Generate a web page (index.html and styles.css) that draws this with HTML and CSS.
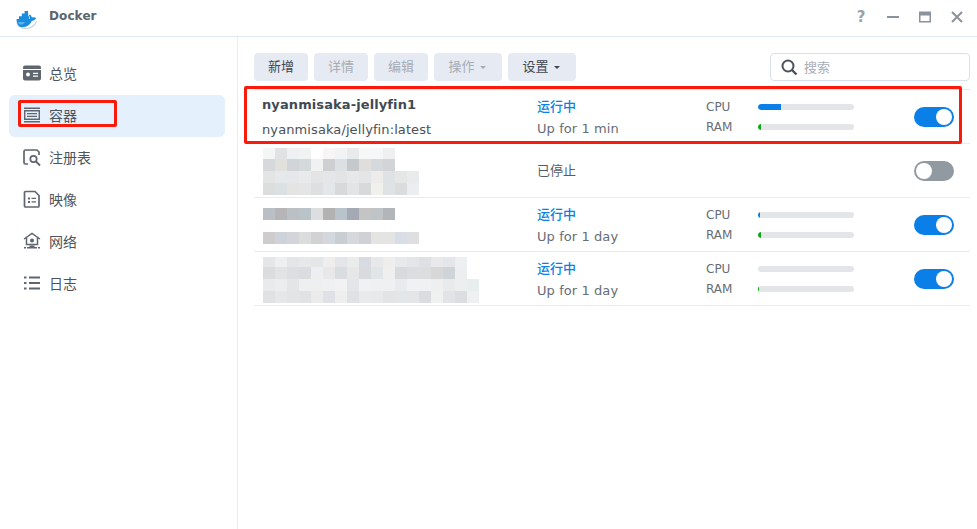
FILE: index.html
```html
<!DOCTYPE html>
<html lang="zh">
<head>
<meta charset="utf-8">
<title>Docker</title>
<link rel="stylesheet" href="styles.css">
</head>
<body>
<div class="window">
  <header class="titlebar">
    <svg class="logo" width="24" height="20" viewBox="0 0 24 20">
      <path fill="#c9d1d8" d="M1 12c1 5 6 7.500 11 7 5-.5 8.500-3.500 10.500-8l-1.500.5c-2 4-6 6.500-10.500 6.500-4 0-7.500-2-9.500-6z"/>
      <path fill="#1a8cdf" d="M1.500 9h13.200c.1-1.300-.1-2.600-.9-3.700l1.200-.9c1.100.9 1.700 2 1.900 3.200 1.400-.5 2.900-.4 4.300.4-.9 1.900-2.500 2.800-4.400 2.800-1.400 3.900-5.300 6.400-9.300 6.400-4 0-6-3.100-6-8.200z"/>
      <path fill="#1a8cdf" d="M4 6.200h10V9H4zM6.800 3.600h6.400v3H6.800zM9.600 1h3.400v3H9.600z"/>
      <path fill="#5cb4ee" d="M3 12h7c-.8 1.600-2.500 2.600-4.500 2.600-1.200 0-2-.9-2.500-2.600z"/>
    </svg>
    <span class="app-name">Docker</span>
    <div class="win-controls">
      <span class="help">?</span>
      <svg width="14" height="14" viewBox="0 0 14 14"><path fill="#8b929b" d="M1 6h12v2H1z"/></svg>
      <svg width="14" height="14" viewBox="0 0 14 14"><path fill="#8b929b" fill-rule="evenodd" d="M1 1.500h12v11H1zM2.500 5.500v5.500h9V5.500z"/></svg>
      <svg width="14" height="14" viewBox="0 0 14 14"><path stroke="#8b929b" stroke-width="2" d="M2 2l10 10M12 2L2 12"/></svg>
    </div>
  </header>
  <div class="main">
    <nav class="sidebar">
      <a class="nav-item">
        <svg class="nav-icon" viewBox="0 0 20 20"><rect x="1" y="2.500" width="18" height="15" rx="2" fill="#5f6670"/><path fill="#fff" d="M1 6h18v1H1z"/><circle cx="6" cy="11.500" r="2" fill="#fff"/><path fill="#fff" d="M11 9.800h5v1.200h-5zM11 12.500h5v1.200h-5z"/></svg>
        <span>总览</span>
      </a>
      <a class="nav-item active">
        <svg class="nav-icon" viewBox="0 0 20 20"><path fill="#5f6670" d="M2 2.500h16v1.600H2zM2 15.900h16v1.600H2z"/><path fill="none" stroke="#5f6670" stroke-width="1.400" d="M2.700 5.700h14.600v8.600H2.700z"/><path fill="#5f6670" d="M5 8h10v1.200H5zM5 10.800h10V12H5z"/></svg>
        <span>容器</span>
      </a>
      <a class="nav-item">
        <svg class="nav-icon" viewBox="0 0 20 20"><path fill="none" stroke="#5f6670" stroke-width="1.700" d="M6 17H3.500a1.500 1.500 0 0 1-1.500-1.500v-11A1.500 1.500 0 0 1 3.500 3H15l2 2v3"/><circle cx="11.500" cy="12" r="3.200" fill="none" stroke="#5f6670" stroke-width="1.700"/><path stroke="#5f6670" stroke-width="1.800" d="M14 14.500l4 4"/></svg>
        <span>注册表</span>
      </a>
      <a class="nav-item">
        <svg class="nav-icon" viewBox="0 0 20 20"><path fill="none" stroke="#5f6670" stroke-width="1.700" d="M3.500 2.500H13l4 4v10.500a1 1 0 0 1-1 1H3.500a1 1 0 0 1-1-1V3.500a1 1 0 0 1 1-1z"/><path fill="#5f6670" d="M6 8.500h2v2H6zM9.500 8.800H14V10H9.500zM6 12h2v2H6zM9.500 12.300H14v1.200H9.500z"/></svg>
        <span>映像</span>
      </a>
      <a class="nav-item">
        <svg class="nav-icon" viewBox="0 0 20 20"><path fill="none" stroke="#5f6670" stroke-width="1.500" d="M2 8l8-5.500L18 8M4.500 7v6.500h11V7"/><circle cx="10" cy="9.500" r="2" fill="#5f6670"/><path fill="#5f6670" d="M7.500 14.500h5V16h2.500v1.500H5V16h2.500zM2 16h2v1.500H2zM16 16h2v1.500h-2z"/></svg>
        <span>网络</span>
      </a>
      <a class="nav-item">
        <svg class="nav-icon" viewBox="0 0 20 20"><path fill="#5f6670" d="M2 3.500h2.500v2H2zM7 3.500h11v2H7zM2 9h2.500v2H2zM7 9h11v2H7zM2 14.500h2.500v2H2zM7 14.500h11v2H7z"/></svg>
        <span>日志</span>
      </a>
    </nav>
    <section class="content">
      <div class="toolbar">
        <button class="btn">新增</button>
        <button class="btn disabled">详情</button>
        <button class="btn disabled">编辑</button>
        <button class="btn disabled wide">操作<i class="caret"></i></button>
        <button class="btn wide">设置<i class="caret"></i></button>
        <div class="search">
          <svg width="18" height="18" viewBox="0 0 18 18"><circle cx="8" cy="8" r="5.500" fill="none" stroke="#4c535c" stroke-width="2"/><path stroke="#4c535c" stroke-width="2.400" d="M12 12l4.500 4.500"/></svg>
          <span>搜索</span>
        </div>
      </div>
      <div class="list">
        <div class="row first">
          <div class="names">
            <div class="name">nyanmisaka-jellyfin1</div>
            <div class="image">nyanmisaka/jellyfin:latest</div>
          </div>
          <div class="status">
            <div class="state run">运行中</div>
            <div class="uptime">Up for 1 min</div>
          </div>
          <div class="usage">
            <div class="meter"><span>CPU</span><div class="bar"><div class="fill blue" style="width:24%"></div></div></div>
            <div class="meter"><span>RAM</span><div class="bar"><div class="fill green" style="width:3%"></div></div></div>
          </div>
          <div class="toggle on"><i></i></div>
        </div>
        <div class="row">
          <div class="names">
            <svg class="mosaic" width="156" height="47" viewBox="0 0 156 47">
              <g>
                <rect x="0" y="0" width="12" height="11" fill="#f4f5f5"/><rect x="12" y="0" width="12" height="11" fill="#e0e2e4"/><rect x="24" y="0" width="12" height="11" fill="#eff0f1"/><rect x="36" y="0" width="12" height="11" fill="#f1f2f2"/><rect x="60" y="0" width="12" height="11" fill="#f7f6f5"/><rect x="72" y="0" width="12" height="11" fill="#f2f3f4"/><rect x="84" y="0" width="12" height="11" fill="#e9eaec"/><rect x="96" y="0" width="12" height="11" fill="#f6f7f7"/><rect x="108" y="0" width="12" height="11" fill="#f6f7f8"/><rect x="120" y="0" width="12" height="11" fill="#eeeff0"/>
                <rect x="0" y="11" width="12" height="12" fill="#d6d9db"/><rect x="12" y="11" width="12" height="12" fill="#e2e0dd"/><rect x="24" y="11" width="12" height="12" fill="#d1d5d9"/><rect x="36" y="11" width="12" height="12" fill="#d4d9dc"/><rect x="48" y="11" width="12" height="12" fill="#f0f2f1"/><rect x="60" y="11" width="12" height="12" fill="#cdcfd0"/><rect x="72" y="11" width="12" height="12" fill="#dce0e2"/><rect x="84" y="11" width="12" height="12" fill="#c5c9cb"/><rect x="96" y="11" width="12" height="12" fill="#dfdedc"/><rect x="108" y="11" width="12" height="12" fill="#d5d9dc"/><rect x="120" y="11" width="12" height="12" fill="#d2d5d7"/>
                <rect x="0" y="23" width="12" height="12" fill="#e3e4e4"/><rect x="12" y="23" width="12" height="12" fill="#e6e9eb"/><rect x="24" y="23" width="12" height="12" fill="#e5e7ea"/><rect x="36" y="23" width="12" height="12" fill="#e9eaea"/><rect x="48" y="23" width="12" height="12" fill="#e4e4e5"/><rect x="60" y="23" width="12" height="12" fill="#e4e6e8"/><rect x="72" y="23" width="12" height="12" fill="#e3e4e6"/><rect x="84" y="23" width="12" height="12" fill="#e7e8ea"/><rect x="96" y="23" width="12" height="12" fill="#e3e5e7"/><rect x="108" y="23" width="12" height="12" fill="#edecea"/><rect x="120" y="23" width="12" height="12" fill="#dfe2e4"/><rect x="132" y="23" width="12" height="12" fill="#e5e6e6"/><rect x="144" y="23" width="12" height="12" fill="#e8eaec"/>
                <rect x="0" y="35" width="12" height="12" fill="#dcdddd"/><rect x="12" y="35" width="12" height="12" fill="#dbe0e3"/><rect x="24" y="35" width="12" height="12" fill="#e4e4e3"/><rect x="36" y="35" width="12" height="12" fill="#e4e5e5"/><rect x="48" y="35" width="12" height="12" fill="#dedfe1"/><rect x="60" y="35" width="12" height="12" fill="#e3e7ea"/><rect x="72" y="35" width="12" height="12" fill="#d8d9db"/><rect x="84" y="35" width="12" height="12" fill="#e3e4e6"/><rect x="96" y="35" width="12" height="12" fill="#d8d9da"/><rect x="108" y="35" width="12" height="12" fill="#f0f0ed"/><rect x="120" y="35" width="12" height="12" fill="#dfe3e5"/><rect x="132" y="35" width="12" height="12" fill="#dbdcdd"/><rect x="144" y="35" width="12" height="12" fill="#ebeef0"/>
              </g>
            </svg>
          </div>
          <div class="status">
            <div class="state stopped">已停止</div>
          </div>
          <div class="usage"></div>
          <div class="toggle off"><i></i></div>
        </div>
        <div class="row">
          <div class="names">
            <svg class="mosaic" width="156" height="36" viewBox="0 0 156 36">
              <rect x="0" y="0" width="12" height="12" fill="#b9bfc4"/><rect x="12" y="0" width="12" height="12" fill="#b5b5b7"/><rect x="24" y="0" width="12" height="12" fill="#bac0c4"/><rect x="36" y="0" width="12" height="12" fill="#b9c3c8"/><rect x="48" y="0" width="12" height="12" fill="#dcdedf"/><rect x="60" y="0" width="12" height="12" fill="#b3b2b3"/><rect x="72" y="0" width="12" height="12" fill="#b9c3cc"/><rect x="84" y="0" width="12" height="12" fill="#a5a9b3"/><rect x="96" y="0" width="12" height="12" fill="#c4c4c4"/><rect x="108" y="0" width="12" height="12" fill="#bfc4c8"/><rect x="120" y="0" width="12" height="12" fill="#b2b6bb"/>
              <rect x="0" y="24" width="12" height="12" fill="#cfcdcc"/><rect x="12" y="24" width="12" height="12" fill="#cdd2db"/><rect x="24" y="24" width="12" height="12" fill="#d3d5da"/><rect x="36" y="24" width="12" height="12" fill="#d9dedc"/><rect x="48" y="24" width="12" height="12" fill="#d2d2d4"/><rect x="60" y="24" width="12" height="12" fill="#d2d8de"/><rect x="72" y="24" width="12" height="12" fill="#c9ced3"/><rect x="84" y="24" width="12" height="12" fill="#d7d8db"/><rect x="96" y="24" width="12" height="12" fill="#cfd1d6"/><rect x="108" y="24" width="12" height="12" fill="#e4e4e2"/><rect x="120" y="24" width="12" height="12" fill="#e4e4e4"/><rect x="132" y="24" width="12" height="12" fill="#d9dde6"/><rect x="144" y="24" width="12" height="12" fill="#dfdfe1"/>
            </svg>
          </div>
          <div class="status">
            <div class="state run">运行中</div>
            <div class="uptime">Up for 1 day</div>
          </div>
          <div class="usage">
            <div class="meter"><span>CPU</span><div class="bar"><div class="fill blue" style="width:2%"></div></div></div>
            <div class="meter"><span>RAM</span><div class="bar"><div class="fill green" style="width:3%"></div></div></div>
          </div>
          <div class="toggle on"><i></i></div>
        </div>
        <div class="row">
          <div class="names">
            <svg class="mosaic" width="216" height="46" viewBox="0 0 216 46">
              <rect x="0" y="0" width="12" height="10" fill="#e5e6e8"/><rect x="12" y="0" width="12" height="10" fill="#eeeff0"/><rect x="24" y="0" width="12" height="10" fill="#e4e5e8"/><rect x="36" y="0" width="12" height="10" fill="#e7e8e9"/><rect x="48" y="0" width="12" height="10" fill="#e5e6e8"/><rect x="60" y="0" width="12" height="10" fill="#eeeeee"/><rect x="72" y="0" width="12" height="10" fill="#e4e5e8"/><rect x="84" y="0" width="12" height="10" fill="#eaebeb"/><rect x="96" y="0" width="12" height="10" fill="#d8dbe2"/><rect x="108" y="0" width="12" height="10" fill="#e6e8ea"/><rect x="120" y="0" width="12" height="10" fill="#eeeeee"/><rect x="132" y="0" width="12" height="10" fill="#e8e9ea"/><rect x="144" y="0" width="12" height="10" fill="#e4e5e8"/><rect x="156" y="0" width="12" height="10" fill="#dfe0e3"/><rect x="168" y="0" width="12" height="10" fill="#e9e9ec"/><rect x="180" y="0" width="12" height="10" fill="#e5e6ea"/><rect x="192" y="0" width="12" height="10" fill="#eeeff0"/>
              <rect x="0" y="10" width="12" height="12" fill="#dadcde"/><rect x="12" y="10" width="12" height="12" fill="#e2e3e5"/><rect x="24" y="10" width="12" height="12" fill="#dcdee2"/><rect x="36" y="10" width="12" height="12" fill="#dbdcdf"/><rect x="48" y="10" width="12" height="12" fill="#eceef0"/><rect x="60" y="10" width="12" height="12" fill="#e8e8e9"/><rect x="72" y="10" width="12" height="12" fill="#d9dde1"/><rect x="84" y="10" width="12" height="12" fill="#e6e7e6"/><rect x="96" y="10" width="12" height="12" fill="#d8dadd"/><rect x="108" y="10" width="12" height="12" fill="#e2e5e8"/><rect x="120" y="10" width="12" height="12" fill="#f0efee"/><rect x="132" y="10" width="12" height="12" fill="#d9dadc"/><rect x="144" y="10" width="12" height="12" fill="#dcdde0"/><rect x="156" y="10" width="12" height="12" fill="#dcddde"/><rect x="168" y="10" width="12" height="12" fill="#d7d7d8"/><rect x="180" y="10" width="12" height="12" fill="#cfd4d9"/><rect x="192" y="10" width="12" height="12" fill="#eceef0"/>
              <rect x="0" y="22" width="12" height="12" fill="#e9eaeb"/><rect x="12" y="22" width="12" height="12" fill="#ecedee"/><rect x="24" y="22" width="12" height="12" fill="#e3e5e7"/><rect x="36" y="22" width="12" height="12" fill="#eef0ef"/><rect x="48" y="22" width="12" height="12" fill="#eef0ef"/><rect x="60" y="22" width="12" height="12" fill="#eef0f1"/><rect x="72" y="22" width="12" height="12" fill="#f1f2f1"/><rect x="84" y="22" width="12" height="12" fill="#e3e5ea"/><rect x="96" y="22" width="12" height="12" fill="#f0f1f3"/><rect x="108" y="22" width="12" height="12" fill="#eff0f2"/><rect x="120" y="22" width="12" height="12" fill="#eff0f1"/><rect x="132" y="22" width="12" height="12" fill="#e8eaec"/><rect x="144" y="22" width="12" height="12" fill="#f0f1f2"/><rect x="156" y="22" width="12" height="12" fill="#f0f1f2"/><rect x="168" y="22" width="12" height="12" fill="#edeff0"/><rect x="180" y="22" width="12" height="12" fill="#e8eaec"/><rect x="192" y="22" width="12" height="12" fill="#edeeef"/><rect x="204" y="22" width="12" height="12" fill="#e8edee"/>
              <rect x="0" y="34" width="12" height="12" fill="#dfe1e3"/><rect x="12" y="34" width="12" height="12" fill="#e6e7e8"/><rect x="24" y="34" width="12" height="12" fill="#e2e4e6"/><rect x="36" y="34" width="12" height="12" fill="#e0e2e4"/><rect x="48" y="34" width="12" height="12" fill="#ebebeb"/><rect x="60" y="34" width="12" height="12" fill="#dfe1e6"/><rect x="72" y="34" width="12" height="12" fill="#edeeed"/><rect x="84" y="34" width="12" height="12" fill="#dfe1e4"/><rect x="96" y="34" width="12" height="12" fill="#e9eaec"/><rect x="108" y="34" width="12" height="12" fill="#e8e9e9"/><rect x="120" y="34" width="12" height="12" fill="#e2e4e6"/><rect x="132" y="34" width="12" height="12" fill="#e3e6e8"/><rect x="144" y="34" width="12" height="12" fill="#e3e5e7"/><rect x="156" y="34" width="12" height="12" fill="#d9dde0"/><rect x="168" y="34" width="12" height="12" fill="#eff0f0"/><rect x="180" y="34" width="12" height="12" fill="#e1e3e6"/><rect x="192" y="34" width="12" height="12" fill="#dbdde0"/><rect x="204" y="34" width="12" height="12" fill="#eef0f2"/>
            </svg>
          </div>
          <div class="status">
            <div class="state run">运行中</div>
            <div class="uptime">Up for 1 day</div>
          </div>
          <div class="usage">
            <div class="meter"><span>CPU</span><div class="bar"></div></div>
            <div class="meter"><span>RAM</span><div class="bar"><div class="fill green" style="width:1.500%"></div></div></div>
          </div>
          <div class="toggle on"><i></i></div>
        </div>
      </div>
    </section>
  </div>
  <div class="mark mark-row"></div>
  <div class="mark mark-nav"></div>
</div>
</body>
</html>
```
FILE: styles.css
```css
* { box-sizing: border-box; }
html, body { margin: 0; height: 100%; }
body {
  background: #fff;
  color: #444b54;
  font-family: "DejaVu Sans", "Noto Sans CJK SC", sans-serif;
  font-size: 13px;
  overflow: hidden;
}
.window { position: relative; display: flex; flex-direction: column; height: 529px; }

.titlebar {
  display: flex;
  align-items: center;
  flex: none;
  height: 37px;
  padding: 0 13px 5px 15px;
  border-bottom: 1px solid #e0e6ed;
}
.logo { flex: none; margin-right: 10px; margin-top: 8px; }
.app-name { font-size: 12px; font-weight: 700; color: #5b6570; line-height: 18px; letter-spacing: .1px; }
.win-controls { display: flex; align-items: center; gap: 18px; margin-left: auto; padding-top: 2px; }
.help { width: 14px; text-align: center; font-size: 15px; font-weight: 700; line-height: 16px; color: #9aa1a9; }

.main { display: flex; flex: 1; min-height: 0; }
.sidebar {
  flex: none;
  width: 238px;
  padding: 16px 12px 0 9px;
  border-right: 1px solid #e9edf2;
  display: flex;
  flex-direction: column;
}
.nav-item {
  display: flex;
  align-items: center;
  height: 42px;
  padding-left: 13px;
  border-radius: 6px;
  font-size: 14px;
  color: #4d545d;
}
.nav-item span { margin-top: -2px; }
.nav-item.active { background: #e4f0fc; }
.nav-icon { width: 20px; height: 20px; margin: -2px 7px 0 0; flex: none; }

.content { flex: 1; min-width: 0; padding: 16px 7px 0 16px; }
.toolbar { display: flex; gap: 6px; height: 28px; margin-bottom: 8px; }
.btn {
  width: 54px;
  height: 28px;
  padding: 0;
  border: 0;
  border-radius: 4px;
  background: #e6ebf3;
  color: #3f4650;
  font: 13px/28px "DejaVu Sans", "Noto Sans CJK SC", sans-serif;
}
.btn.wide { width: 68px; }
.btn.disabled { color: #a6acb4; }
.caret {
  display: inline-block;
  margin: 0 2px 0 5px;
  vertical-align: 2px;
  border: 3.500px solid transparent;
  border-bottom-width: 0;
  border-top-color: currentColor;
}
.search {
  display: flex;
  align-items: center;
  gap: 6px;
  width: 200px;
  height: 28px;
  margin-left: auto;
  padding-left: 9px;
  border: 1px solid #d7e1ec;
  border-radius: 4px;
  color: #a9aeb5;
}
.search span { margin-top: -2px; }

.row {
  display: flex;
  align-items: center;
  height: 54px;
  border-bottom: 1px solid #e9ebf1;
}
.row.first { height: 55px; border-top: 1px solid #e4e6eb; }
.names { flex: none; width: 283px; padding-left: 8px; margin-top: 2px; }
.name { font-weight: 700; color: #414a54; line-height: 18px; margin-bottom: 7px; letter-spacing: .1px; }
.image { color: #4a5159; line-height: 18px; letter-spacing: .1px; }
.mosaic { display: block; margin-left: 1px; }
.status { flex: none; width: 169px; margin-top: 2px; }
.state { font-size: 13px; line-height: 18px; }
.state.run { color: #0a7fe8; font-weight: 500; margin: 0 0 4px; }
.state.stopped { color: #555c65; margin-top: -2px; }
.uptime { color: #666d75; line-height: 18px; letter-spacing: .08px; }
.usage { flex: none; width: 208px; display: flex; flex-direction: column; gap: 3px; }
.meter { display: flex; align-items: center; height: 17px; color: #666d75; font-size: 12px; }
.meter span { width: 52px; }
.bar { width: 96px; height: 6px; border-radius: 3px; background: #e3e5e8; overflow: hidden; }
.fill { height: 100%; border-radius: 3px 0 0 3px; }
.fill.blue { background: #0a7fe8; }
.fill.green { background: #0aa80e; }

.toggle { flex: none; display: flex; align-items: center; width: 40px; height: 20px; padding: 2px; border-radius: 10px; }
.toggle i { width: 16px; height: 16px; border-radius: 50%; background: #fff; }
.toggle.on { background: #0a7fe8; justify-content: flex-end; }
.toggle.off { background: #929aa1; }

.mark { position: absolute; border: 3px solid #fa1a0c; border-radius: 2px; pointer-events: none; }
.mark-row { left: 244px; top: 86px; width: 718px; height: 58px; }
.mark-nav { left: 18px; top: 100px; width: 99px; height: 27px; }
```
